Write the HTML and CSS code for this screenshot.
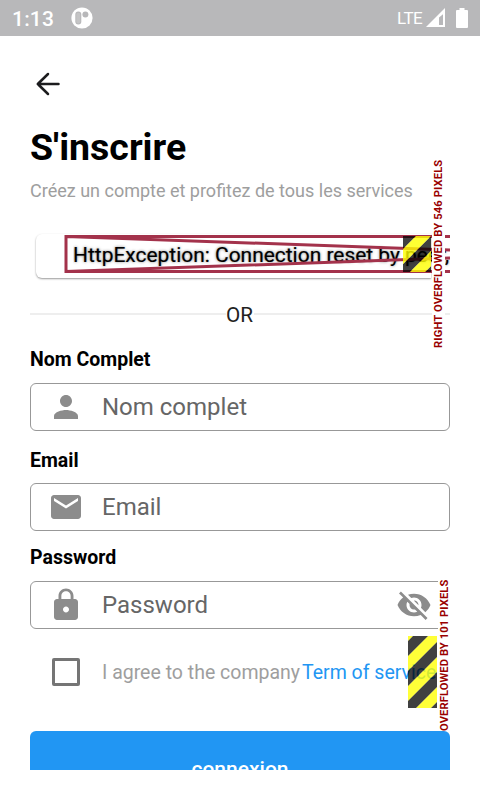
FILE: index.html
```html
<!DOCTYPE html>
<html lang="fr">
<head>
<meta charset="utf-8">
<title>S'inscrire</title>
<link rel="stylesheet" href="styles.css">
</head>
<body>
<header class="status">
  <span class="clock">1:13</span>
  <svg class="app" width="22" height="22" viewBox="0 0 22 22"><circle cx="11" cy="11" r="10.6" fill="#fff"/><rect x="4.300" y="4.500" width="6" height="13" rx="3" fill="#b8b8ba"/><rect x="5.300" y="5.800" width="4" height="10.600" rx="1.800" fill="#c4c4c5"/><circle cx="14.400" cy="7.400" r="3" fill="#b8b8ba"/></svg>
  <span class="lte">LTE</span>
  <svg class="signal" width="20" height="20" viewBox="0 0 20 20"><path fill="#fff" fill-rule="evenodd" d="M0 19L19 0V19ZM13 9.500V17H17V6.200Z"/></svg>
  <svg class="battery" width="12" height="20" viewBox="0 0 12 20"><path fill="#fff" d="M3.500 0h5v2H11q1 0 1 1v16q0 1-1 1H1q-1 0-1-1V3q0-1 1-1h2.500z"/></svg>
</header>
<main class="page">
  <svg class="back" width="26" height="26" viewBox="0 0 26 26"><path d="M13 3L2.800 13L13 23M2.800 13H23.500" fill="none" stroke="#1c1c1e" stroke-width="2.500" stroke-linecap="round" stroke-linejoin="round"/></svg>
  <h1>S'inscrire</h1>
  <p class="intro">Créez un compte et profitez de tous les services</p>
  <section class="error">
    <div class="card"></div>
    <div class="message">HttpException: Connection reset by peer, uri</div>
    <svg class="frame" width="386" height="40" viewBox="0 0 386 40"><path fill="none" stroke="#a3324b" stroke-width="3" d="M386 2.500H2V37.500H386M2 2.500L386 16M2 37.500L386 24"/></svg>
    <svg class="stripes" width="28" height="36" viewBox="0 0 28 36"><path fill="#000" fill-opacity=".75" d="M0 0H13L0 13ZM28 0V15L7 36H0V28ZM28 30V36H22Z"/><path fill="#ff0" fill-opacity=".8" d="M13 0H28L0 28V13ZM28 15V30L22 36H7Z"/></svg>
    <div class="overflow top">RIGHT OVERFLOWED BY 546 PIXELS</div>
  </section>
  <div class="divider"><span>OR</span></div>
  <label class="label name">Nom Complet</label>
  <div class="field"><svg class="icon" width="36" height="36" viewBox="0 0 24 24"><path d="M12 12c2.210 0 4-1.790 4-4s-1.790-4-4-4-4 1.790-4 4 1.790 4 4 4zm0 2c-2.670 0-8 1.340-8 4v2h16v-2c0-2.660-5.330-4-8-4z"/></svg><span>Nom complet</span></div>
  <label class="label email">Email</label>
  <div class="field near"><svg class="icon" width="36" height="36" viewBox="0 0 24 24"><path d="M20 4H4c-1.100 0-2 .9-2 2v12c0 1.100.9 2 2 2h16c1.100 0 2-.9 2-2V6c0-1.100-.9-2-2-2zm0 4l-8 5-8-5V6l8 5 8-5v2z"/></svg><span>Email</span></div>
  <label class="label password">Password</label>
  <div class="field"><svg class="icon" width="36" height="36" viewBox="0 0 24 24"><path d="M18 8h-1V6c0-2.760-2.240-5-5-5S7 3.240 7 6v2H6c-1.100 0-2 .9-2 2v10c0 1.100.9 2 2 2h12c1.100 0 2-.9 2-2V10c0-1.100-.9-2-2-2zm-6 9c-1.100 0-2-.9-2-2s.9-2 2-2 2 .9 2 2-.9 2-2 2zm3.100-9H8.900V6c0-1.710 1.390-3.100 3.100-3.100s3.100 1.390 3.100 3.100v2z"/></svg><span>Password</span><svg class="icon eye" width="36" height="36" viewBox="0 0 24 24"><path d="M12 7c2.760 0 5 2.240 5 5 0 .65-.13 1.260-.36 1.830l2.920 2.920c1.510-1.260 2.700-2.890 3.430-4.750-1.730-4.390-6-7.500-11-7.500-1.400 0-2.740.25-3.980.7l2.160 2.160C10.740 7.130 11.350 7 12 7zM2 4.270l2.280 2.280.46.46C3.080 8.300 1.780 10.020 1 12c1.730 4.390 6 7.500 11 7.500 1.550 0 3.030-.3 4.380-.84l.42.42L19.730 22 21 20.730 3.270 3 2 4.270zM7.530 9.800l1.550 1.550c-.05.21-.08.43-.08.65 0 1.660 1.340 3 3 3 .22 0 .44-.03.65-.08l1.550 1.550c-.67.33-1.410.53-2.200.53-2.760 0-5-2.240-5-5 0-.79.2-1.530.53-2.200zm4.310-.78l3.150 3.150.02-.16c0-1.660-1.340-3-3-3l-.17.010z"/></svg></div>
  <div class="terms">
    <i class="check"></i><span class="agree">I agree to the company</span><a>Term of service</a>
    <svg class="hazard" width="29" height="72" viewBox="0 0 29 72"><path fill="#ff0" fill-opacity=".78" d="M0 0H5L0 5ZM20 0H29V6L0 35V20ZM29 21V36L0 65V50ZM29 51V66L23 72H8Z"/><path fill="#000" fill-opacity=".75" d="M5 0H20L0 20V5ZM29 6V21L0 50V35ZM29 36V51L8 72H0V65ZM29 66V72H23Z"/></svg>
    <div class="overflow bottom">OVERFLOWED BY 101 PIXELS</div>
  </div>
  <button class="submit">connexion</button>
</main>
</body>
</html>
```
FILE: styles.css
```css
* { box-sizing: border-box; }
body { margin: 0; background: #fff; font-family: Roboto, sans-serif; color: #000; }
.status { height: 36px; background: #b8b8ba; color: #fff; display: flex; align-items: center; padding: 0 12px; }
.clock { font-size: 21px; font-weight: 500; width: 58.500px; letter-spacing: .2px; padding-top: 1px; }
.lte { font-size: 17px; margin-left: auto; letter-spacing: -.6px; margin-right: 4px; }
.signal { margin-right: 10px; }
.page { height: 734px; padding: 0 30px; overflow: hidden; display: flex; flex-direction: column; }
.back { margin: 35px 0 0 5px; flex: none; }
h1 { margin: 26px 0 0; font-size: 37.500px; line-height: 48px; height: 48px; font-weight: 700; white-space: nowrap; }
.intro { margin: 8px 0 0; font-size: 18px; line-height: 24px; color: #9e9e9e; white-space: nowrap; }
.error { position: relative; height: 48px; margin-top: 31px; flex: none; }
.card { height: 44px; margin: 0 19px 0 6px; border-radius: 6px 0 0 6px; background: #fff; box-shadow: 0 1px 2px #0006; }
.message { position: absolute; left: 43px; top: 8px; width: 377px; overflow: hidden; white-space: nowrap; font-size: 20.950px; line-height: 26px; height: 28px; -webkit-text-stroke: .15px #000; text-shadow: 0 0 3px #0008; }
.frame { position: absolute; left: 34px; top: 0; }
.stripes { position: absolute; left: 373px; top: 2px; }
.overflow { position: absolute; background: #fff; color: #900; font-weight: 700; font-size: 11.200px; line-height: 13px; writing-mode: vertical-rl; transform: rotate(180deg); white-space: nowrap; }
.top { left: 402px; top: -74px; width: 13px; height: 188px; letter-spacing: .12px; }
.bottom { left: 408px; top: -58px; width: 14px; height: 153px; letter-spacing: .08px; }
.divider { display: flex; align-items: center; gap: 1px; margin-top: 19px; height: 26px; font-size: 20.700px; color: #212121; }
.divider span { padding-top: 2px; margin-left: -1px; }
.divider::before, .divider::after { content: ""; flex: 1; height: 2px; background: #eee; }
.label { font-size: 19.500px; line-height: 24px; font-weight: 700; }
.name { margin-top: 21px; }
.email { margin-top: 18px; }
.password { margin-top: 15px; }
.field { flex: none; height: 48px; border: 1.500px solid #989898; border-radius: 6px; display: flex; align-items: center; padding: 0 17px; margin-top: 11px; font-size: 24px; color: #666; }
.field.near { margin-top: 10px; }
.icon { fill: #8c8c8c; margin-right: 18px; flex: none; }
.eye { margin: 0 0 0 auto; }
.terms { position: relative; height: 72px; flex: none; margin-top: 7px; display: flex; align-items: center; white-space: nowrap; font-size: 19.500px; color: #9e9e9e; }
.check { width: 28px; height: 28px; border: 3px solid #757575; border-radius: 2px; margin: 0 22px; flex: none; }
.agree { width: 200px; flex: none; }
.terms a { color: #2196f3; }
.hazard { position: absolute; left: 378px; top: 0; }
.submit { flex: none; margin-top: 23px; width: 420px; height: 75px; border: 0; border-radius: 6px; background: #2196f3; color: #fff; font: 500 21px Roboto, sans-serif; }
```
